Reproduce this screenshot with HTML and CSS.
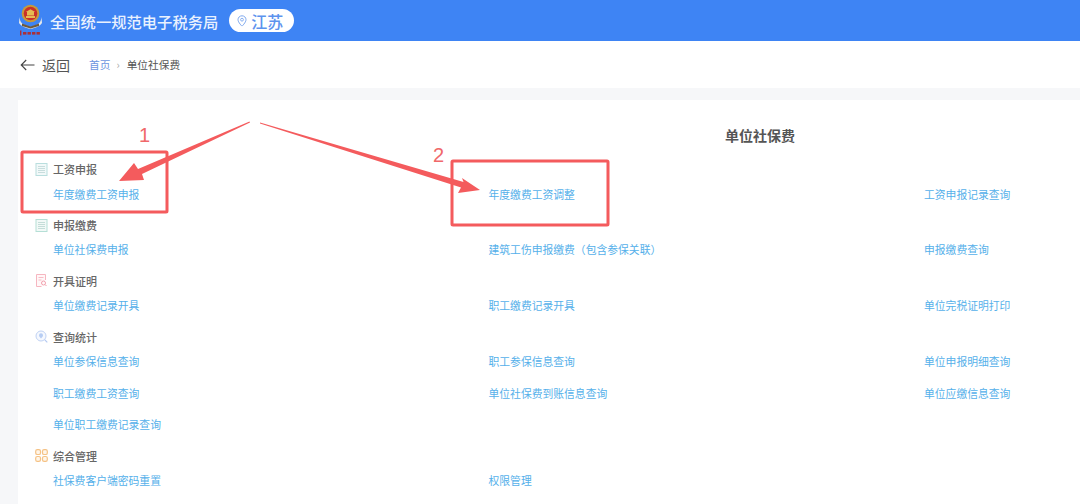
FILE: index.html
```html
<!DOCTYPE html>
<html lang="zh-CN">
<head>
<meta charset="utf-8">
<title>单位社保费</title>
<link rel="stylesheet" href="styles.css">
</head>
<body>
<header class="topbar">
  <svg class="emblem" width="28" height="36" viewBox="0 0 28 36">
    <path d="M1.5 13 C2 18 4 20 7 21 L12.5 23 L18 21 C21 20 23 18 23.5 13 L24 19 C22 22 19 23.5 12.5 25 C6 23.5 3 22 1 19 Z" fill="#e4e8ea"/>
    <path d="M4 19.5 L12.5 22.5 L21 19.5 L21 22 L12.5 24.5 L4 22 Z" fill="#6f5a3c"/>
    <circle cx="12.5" cy="9.5" r="8.8" fill="#c8993a"/>
    <circle cx="12.5" cy="9.5" r="6.8" fill="#c9302a"/>
    <path d="M8 12 H17 V14 H8 Z M9 8 H16 V11.5 H9 Z" fill="#e6bb52"/>
    <path d="M7.8 8 L12.5 5.2 L17.2 8 Z" fill="#e6bb52"/>
    <g fill="#a93038">
      <rect x="2" y="26.5" width="1.4" height="5"/><rect x="5" y="28" width="3.4" height="2.6"/><rect x="9.5" y="28" width="3.4" height="2.6"/><rect x="14" y="28" width="3.4" height="2.6"/><rect x="18.5" y="28" width="3.4" height="2.6"/>
    </g>
  </svg>
  <span class="site-name">全国统一规范电子税务局</span>
  <span class="region">
    <svg width="10" height="12" viewBox="0 0 10 12"><path d="M5 .8 C2.6 .8 1 2.6 1 4.7 C1 7.4 5 11.2 5 11.2 C5 11.2 9 7.4 9 4.7 C9 2.6 7.4 .8 5 .8 Z" fill="none" stroke="#7fa9ee" stroke-width="1"/><circle cx="5" cy="4.7" r="1.4" fill="none" stroke="#7fa9ee" stroke-width=".9"/></svg>
    江苏
  </span>
</header>

<nav class="crumbbar">
  <span class="back">
    <svg width="15" height="12" viewBox="0 0 15 12"><path d="M14.5 6 H1.2 M6.2 1 L1.2 6 L6.2 11" fill="none" stroke="#444" stroke-width="1.1"/></svg>
    返回
  </span>
  <span class="crumb-home">首页</span>
  <span class="crumb-sep">›</span>
  <span class="crumb-current">单位社保费</span>
</nav>

<main class="card">
  <h1 class="card-title">单位社保费</h1>

  <section class="group">
    <h2 class="group-head">
      <svg class="group-icon" width="12" height="13" viewBox="0 0 12 13"><rect x=".5" y=".5" width="11" height="12" fill="#f2f9f9" stroke="#b9dede"/><path d="M2.5 3.5H9.5M2.5 5.5H9.5M2.5 7.5H9.5M2.5 9.5H9.5" stroke="#bcd6d6" stroke-width=".8"/></svg>
      工资申报
    </h2>
    <div class="links">
      <a class="link">年度缴费工资申报</a>
      <a class="link">年度缴费工资调整</a>
      <a class="link">工资申报记录查询</a>
    </div>
  </section>

  <section class="group">
    <h2 class="group-head">
      <svg class="group-icon" width="12" height="13" viewBox="0 0 12 13"><rect x=".5" y=".5" width="11" height="12" fill="#f2f9f7" stroke="#b5dfd6"/><path d="M2.5 3.5H9.5M2.5 5.5H9.5M2.5 7.5H9.5M2.5 9.5H9.5" stroke="#b8d6cf" stroke-width=".8"/></svg>
      申报缴费
    </h2>
    <div class="links">
      <a class="link">单位社保费申报</a>
      <a class="link">建筑工伤申报缴费（包含参保关联）</a>
      <a class="link">申报缴费查询</a>
    </div>
  </section>

  <section class="group">
    <h2 class="group-head">
      <svg class="group-icon" width="12" height="13" viewBox="0 0 12 13"><path d="M6 12.5H1V.5H10V6" fill="#fff7f8" stroke="#f6b6c0"/><path d="M3 3.5H8M3 6H6" stroke="#f6b6c0" stroke-width=".9"/><circle cx="8" cy="9" r="2" fill="none" stroke="#f2a0ad"/><path d="M9.4 10.4L11 12" stroke="#f2a0ad"/></svg>
      开具证明
    </h2>
    <div class="links">
      <a class="link">单位缴费记录开具</a>
      <a class="link">职工缴费记录开具</a>
      <a class="link">单位完税证明打印</a>
    </div>
  </section>

  <section class="group">
    <h2 class="group-head">
      <svg class="group-icon" width="13" height="13" viewBox="0 0 13 13"><circle cx="6" cy="6" r="5" fill="#f5f8fe" stroke="#c0d2f4"/><path d="M9.6 9.6L12.3 12.3" stroke="#b4c9f2" stroke-width="1.2"/><path d="M6 8.4 C4.6 7 4 6.2 4 5.2 A2 2 0 0 1 8 5.2 C8 6.2 7.4 7 6 8.4Z" fill="#b7cdf3"/></svg>
      查询统计
    </h2>
    <div class="links">
      <a class="link">单位参保信息查询</a>
      <a class="link">职工参保信息查询</a>
      <a class="link">单位申报明细查询</a>
      <a class="link">职工缴费工资查询</a>
      <a class="link">单位社保费到账信息查询</a>
      <a class="link">单位应缴信息查询</a>
      <a class="link">单位职工缴费记录查询</a>
    </div>
  </section>

  <section class="group">
    <h2 class="group-head">
      <svg class="group-icon" width="13" height="13" viewBox="0 0 13 13"><g fill="#fff6ea" stroke="#f5c285" stroke-width="1.2"><rect x=".7" y=".7" width="4.8" height="4.8" rx="1.6"/><rect x="7.5" y=".7" width="4.8" height="4.8" rx="1.6"/><rect x=".7" y="7.5" width="4.8" height="4.8" rx="1.6"/><rect x="7.5" y="7.5" width="4.8" height="4.8" rx="1.6"/></g></svg>
      综合管理
    </h2>
    <div class="links">
      <a class="link">社保费客户端密码重置</a>
      <a class="link">权限管理</a>
    </div>
  </section>
</main>

<svg class="markup" width="1080" height="504" viewBox="0 0 1080 504" aria-hidden="true">
  <rect x="22" y="152" width="145" height="60" rx="1"/>
  <rect x="452" y="161" width="156" height="64" rx="1"/>
  <polygon class="fill" points="249.5,121.5 250,122.5 142,174 144,180 119,181 134,163 138,169"/>
  <polygon class="fill" points="260,122.5 463.5,182 462,178 480,190 458,193 461,187.5 260,123.5"/>
</svg>
<span class="mark mark-one">1</span>
<span class="mark mark-two">2</span>
</body>
</html>
```
FILE: styles.css
```css
* { box-sizing: border-box; }
html, body { margin: 0; height: 504px; overflow: hidden; }
body {
  position: relative;
  background: #f6f7f9;
  font-family: "Noto Sans CJK SC", "Noto Sans", sans-serif;
  color: #555;
}
.topbar {
  height: 41px;
  background: #3e84f4;
  display: flex;
  align-items: center;
  padding-left: 18px;
}
.emblem { flex: none; margin-top: 3px; }
.site-name {
  margin-left: 4px;
  color: #e9f1fe;
  font-size: 15.3px;
  font-weight: 500;
  line-height: 20px;
  white-space: nowrap;
}
.region {
  margin-left: 11px;
  width: 65px;
  height: 23px;
  border-radius: 12px;
  background: #fff;
  display: flex;
  align-items: center;
  gap: 4px;
  padding-left: 8px;
  color: #5d93ee;
  font-size: 16px;
  font-weight: 500;
}
.crumbbar {
  height: 47px;
  background: #fff;
  display: flex;
  align-items: center;
  font-size: 10.7px;
  padding-left: 20px;
}
.back {
  display: flex;
  align-items: center;
  gap: 7px;
  font-size: 14px;
  color: #555;
  margin-right: 19px;
}
.crumb-home { color: #6c95e0; }
.crumb-sep { margin: 0 7px 0 6px; color: #aaa; }
.crumb-current { color: #555; }
.card {
  margin: 12px 0 0 18px;
  height: 404px;
  background: #fff;
  padding: 25px 0 0 35px;
}
.card-title {
  margin: 0 0 16.4px;
  padding-left: 672px;
  font-size: 14px;
  line-height: 20px;
  font-weight: 700;
  color: #555;
}
.group { margin-bottom: 15.6px; }
.group-head {
  margin: 0 0 8.2px -18px;
  display: flex;
  align-items: center;
  height: 16px;
  font-size: 11px;
  font-weight: 500;
  color: #666;
}
.group-icon { width: 13px; margin-right: 5px; flex: none; }
.links {
  display: grid;
  grid-template-columns: 435.5px 435.5px 140px;
  grid-auto-rows: 16px;
  row-gap: 15.6px;
}
.link {
  font-size: 10.8px;
  line-height: 16px;
  color: #55b0ea;
  white-space: nowrap;
}
.markup { position: absolute; left: 0; top: 0; pointer-events: none; }
.markup rect { fill: none; stroke: #f45b5d; stroke-width: 3; }
.markup .fill { fill: #f45b5d; }
.mark {
  position: absolute;
  font-family: "Liberation Sans", sans-serif;
  font-size: 20px;
  line-height: 24px;
  color: #f0686a;
}
.mark-one { left: 139px; top: 123px; }
.mark-two { left: 433px; top: 143px; }
```
